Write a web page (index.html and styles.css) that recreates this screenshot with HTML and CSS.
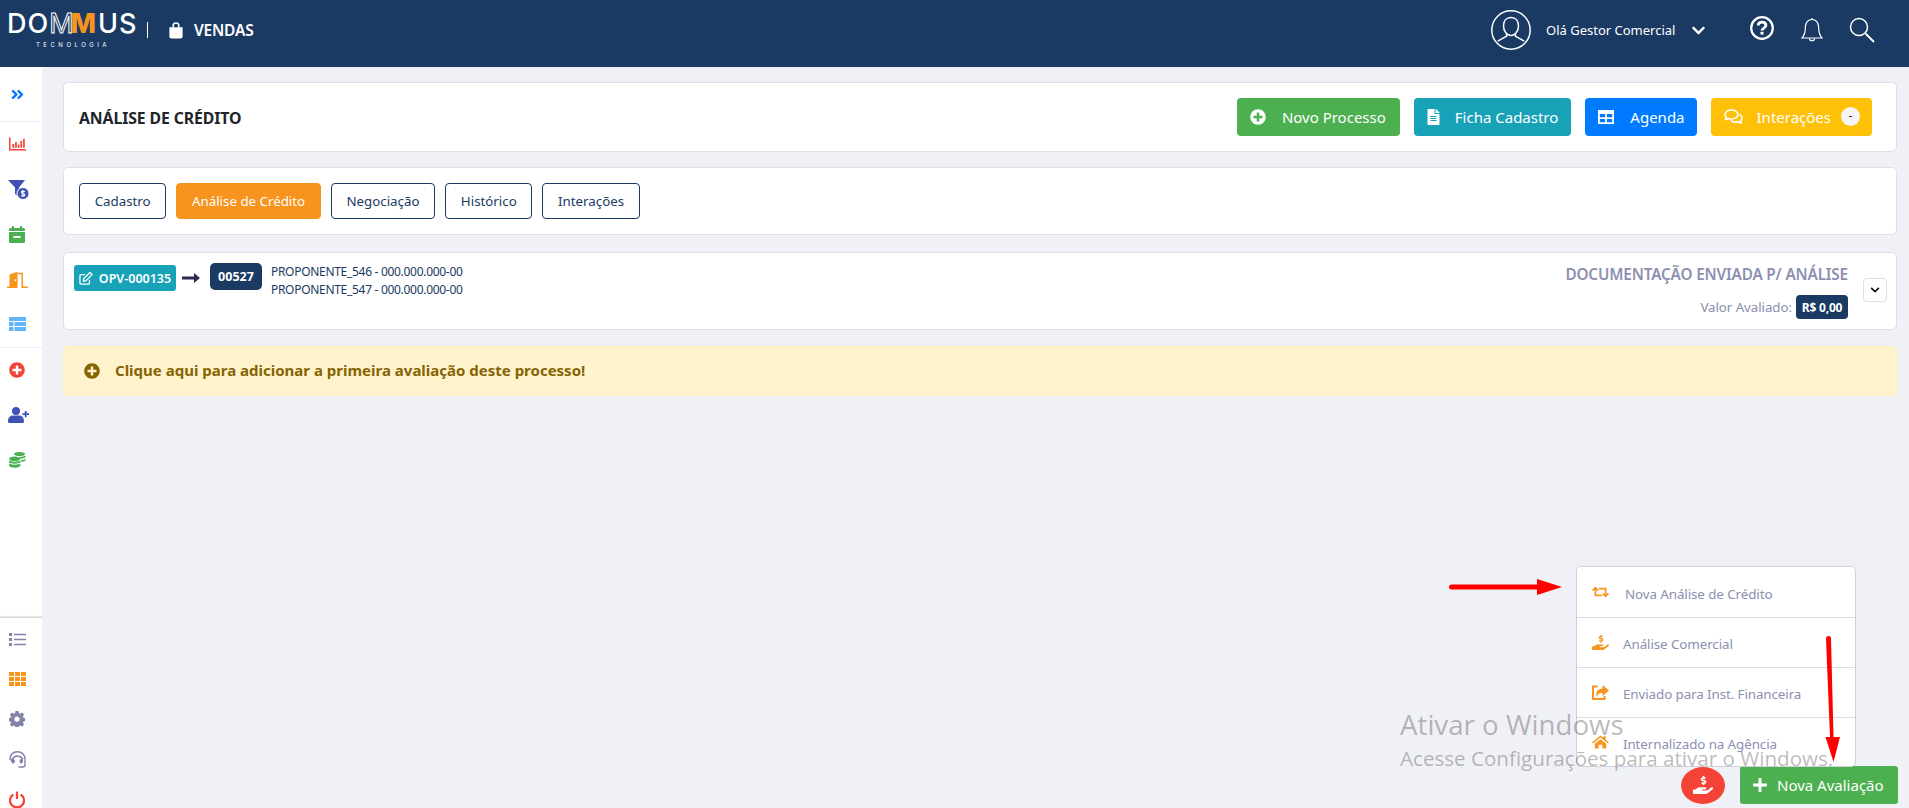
FILE: index.html
```html
<!DOCTYPE html>
<html lang="pt-BR">
<head>
<meta charset="utf-8">
<title>Dommus Vendas</title>
<link rel="stylesheet" href="styles.css">
</head>
<body>
<svg class="defs" aria-hidden="true">
  <symbol id="plus-circle" viewBox="0 0 512 512"><path fill="currentColor" d="M256 8C119 8 8 119 8 256s111 248 248 248 248-111 248-248S393 8 256 8zm144 276c0 6.6-5.4 12-12 12h-92v92c0 6.6-5.4 12-12 12h-56c-6.6 0-12-5.4-12-12v-92h-92c-6.6 0-12-5.4-12-12v-56c0-6.6 5.4-12 12-12h92v-92c0-6.6 5.4-12 12-12h56c6.6 0 12 5.4 12 12v92h92c6.6 0 12 5.4 12 12v56z"/></symbol>
  <symbol id="chevron" viewBox="0 0 448 512"><path fill="currentColor" d="M207.029 381.476L12.686 187.132c-9.373-9.373-9.373-24.569 0-33.941l22.667-22.667c9.357-9.357 24.522-9.375 33.901-.04L224 284.505l154.745-154.021c9.379-9.335 24.544-9.317 33.901.04l22.667 22.667c9.373 9.373 9.373 24.569 0 33.941L240.971 381.476c-9.373 9.372-24.569 9.372-33.942 0z"/></symbol>
  <symbol id="plus" viewBox="0 0 448 512"><path fill="currentColor" d="M416 208H272V64c0-17.67-14.33-32-32-32h-32c-17.67 0-32 14.33-32 32v144H32c-17.67 0-32 14.33-32 32v32c0 17.67 14.33 32 32 32h144v144c0 17.67 14.33 32 32 32h32c17.67 0 32-14.33 32-32V304h144c17.67 0 32-14.33 32-32v-32c0-17.67-14.33-32-32-32z"/></symbol>
  <symbol id="hand" viewBox="0 0 576 512"><path fill="currentColor" d="M271.06,144.3l54.27,14.3a8.59,8.59,0,0,1,6.63,8.1c0,4.6-4.09,8.4-9.12,8.4h-35.6a30,30,0,0,1-11.19-2.2c-5.24-2.2-11.28-1.7-15.3,2l-19,17.5a11.68,11.68,0,0,0-2.25,2.66,11.42,11.42,0,0,0,3.88,15.74,83.77,83.77,0,0,0,34.51,11.5V240c0,8.8,7.83,16,17.37,16h17.37c9.55,0,17.38-7.2,17.38-16V222.4c32.93-3.6,57.84-31,53.5-63-3.15-23-22.46-41.3-46.56-47.7L282.68,97.4a8.59,8.59,0,0,1-6.63-8.1c0-4.6,4.09-8.4,9.12-8.4h35.6A30,30,0,0,1,332,83.1c5.23,2.2,11.28,1.7,15.3-2l19-17.5A11.31,11.31,0,0,0,368.47,61a11.43,11.43,0,0,0-3.84-15.78,83.82,83.82,0,0,0-34.52-11.5V16c0-8.8-7.82-16-17.37-16H295.37C285.82,0,278,7.2,278,16V33.6c-32.89,3.6-57.85,31-53.51,63C227.63,119.6,247,137.9,271.06,144.3ZM565.27,328.1c-11.8-10.7-30.2-10-42.6,0L430.27,402a63.64,63.64,0,0,1-40,14H272a16,16,0,0,1,0-32h78.29c15.9,0,30.71-10.9,33.25-26.6a31.2,31.2,0,0,0,.46-5.46A32,32,0,0,0,352,320H192a117.66,117.66,0,0,0-74.1,26.29L71.4,384H16A16,16,0,0,0,0,400v96a16,16,0,0,0,16,16H372.77a64,64,0,0,0,40-14L564,377a32,32,0,0,0,1.28-48.9Z"/></symbol>
</svg>

<header class="topbar">
  <div class="brand">
    <div class="logo">
      <div class="logo-word">DO<span class="m-outline">M</span><span class="m-fill">M</span>US</div>
      <div class="logo-sub">TECNOLOGIA</div>
    </div>
    <span class="bar-sep"></span>
    <svg class="bag" viewBox="0 0 16 18"><path fill="none" stroke="#fff" stroke-width="1.600" d="M5 6V4a3 3 0 0 1 6 0v2"/><path fill="#fff" d="M1 5.500h14v9.800a2.200 2.200 0 0 1-2.200 2.200H3.200A2.200 2.200 0 0 1 1 15.300z"/></svg>
    <span class="module">VENDAS</span>
  </div>
  <div class="top-right">
    <svg class="avatar" viewBox="0 0 40 40" fill="none" stroke="#fff" stroke-width="1.500"><circle cx="20" cy="20" r="19.200"/><path d="M20 7.500c-4.600 0-7.500 3.400-7.500 8.200 0 4.800 3 9.800 7.500 9.800s7.500-5 7.500-9.800c0-4.800-2.900-8.200-7.500-8.200z"/><path d="M15.500 24l.2 2.200-9 4.900M24.500 24l-.2 2.200 9 4.900"/></svg>
    <span class="user">Olá Gestor Comercial</span>
    <svg class="user-chev"><use href="#chevron"/></svg>
    <svg class="help" viewBox="0 0 24 24" fill="none" stroke="#fff"><circle cx="12" cy="12" r="10.800" stroke-width="2.200"/><path stroke-width="2.800" d="M8.200 9.600c0-2.200 1.700-3.500 3.900-3.500s3.800 1.300 3.800 3.200c0 2.800-3.900 2.700-3.900 5.300"/><path stroke-width="3" d="M12 15.800v2.800"/></svg>
    <svg class="bell" viewBox="0 0 22 26" fill="none" stroke="#fff" stroke-width="1.200"><path d="M11 2.500c-4 0-6.600 3.300-6.600 7.500 0 6.500-1.200 8.500-3.400 11h20c-2.200-2.500-3.400-4.500-3.400-11 0-4.200-2.600-7.500-6.600-7.500z"/><path d="M11 1v1.500M8.500 21.500c0 3 5 3 5 0"/></svg>
    <svg class="search" viewBox="0 0 26 26" fill="none" stroke="#fff" stroke-width="1.500"><circle cx="10" cy="10" r="8.500"/><path d="M16.500 16.500L25 25" stroke-width="1.800"/></svg>
  </div>
</header>

<div class="shell">
  <aside class="side">
    <div class="side-top">
      <div class="side-head">
        <svg class="ic ic-expand" viewBox="0 0 448 512"><path fill="currentColor" d="M224.3 273l-136 136c-9.400 9.400-24.600 9.400-33.900 0l-22.600-22.600c-9.400-9.400-9.400-24.600 0-33.900l96.400-96.400-96.400-96.400c-9.400-9.400-9.400-24.600 0-33.900L54.300 103c9.400-9.400 24.600-9.400 33.900 0l136 136c9.500 9.400 9.500 24.600.1 34zm192-34l-136-136c-9.400-9.400-24.600-9.400-33.900 0l-22.600 22.600c-9.400 9.400-9.400 24.600 0 33.900l96.400 96.400-96.400 96.400c-9.400 9.400-9.400 24.600 0 33.900l22.600 22.600c9.400 9.400 24.600 9.400 33.900 0l136-136c9.400-9.200 9.400-24.400 0-33.800z"/></svg>
      </div>
      <div class="side-group">
        <div class="slot slot-chart"><svg class="ic red" viewBox="0 0 18 14"><path fill="currentColor" d="M0 0h1.600v12.200H18V14H0z"/><path fill="currentColor" d="M3.500 7h2v4h-2zM6.500 5h1.800v6H6.500zM9.300 7.500h1.800V11H9.300zM12.100 3.500h1.800V11h-1.800zM14.900 1.500h1.800V11h-1.800z"/></svg></div>
        <div class="slot"><svg class="ic ic-funnel" viewBox="0 0 21 20"><path fill="#3f51b5" d="M0 0h17l-6 7.500V17l-4-3V7.500z"/><circle cx="15" cy="13.500" r="6" fill="#3f51b5" stroke="#fff" stroke-width="1"/><path fill="none" stroke="#fff" stroke-width="1.100" d="M16.800 11.800c-.8-1-3.400-1-3.500.5 0 1.700 3.600.9 3.500 2.600-.1 1.500-2.800 1.400-3.600.4M15 10v7"/></svg></div>
        <div class="slot"><svg class="ic green" viewBox="0 0 16 17"><path fill="currentColor" d="M3 0h2v2h6V0h2v2h1.500A1.500 1.500 0 0 1 16 3.500v12a1.500 1.500 0 0 1-1.500 1.500h-13A1.500 1.500 0 0 1 0 15.500v-12A1.500 1.500 0 0 1 1.500 2H3z"/><path fill="#fff" d="M0 5h16v1H0zM4.500 10h7v2h-7z"/></svg></div>
        <div class="slot"><svg class="ic ic-door orange" viewBox="0 0 21 16"><path fill="currentColor" d="M0 14.500h2.500V2.500L9.500 0h1v16H0z"/><path fill="#fff" d="M7.500 7.500h1.500v1.500H7.500z"/><path fill="none" stroke="currentColor" stroke-width="1.500" d="M11 1.500h4.200v13.700H21"/></svg></div>
        <div class="slot slot-up"><svg class="ic ic-table lblue" viewBox="0 0 17 14"><path fill="currentColor" d="M0 0h17v4H0zM0 5h4.500v4H0zM5.500 5H17v4H5.500zM0 10h4.500v4H0zM5.500 10H17v4H5.500z"/></svg></div>
      </div>
      <div class="side-group side-group-b">
        <div class="slot"><svg class="ic ic-addc red"><use href="#plus-circle"/></svg></div>
        <div class="slot"><svg class="ic ic-user indigo" viewBox="0 0 21 16"><circle cx="8" cy="4" r="4" fill="currentColor"/><path fill="currentColor" d="M0 14c0-3.500 2.500-5.500 5-5.500h6c2.500 0 5 2 5 5.500v.5a1.500 1.500 0 0 1-1.500 1.500h-13A1.500 1.500 0 0 1 0 14.500zM16.800 4h1.800v2.200h2.400V8h-2.400v2.200h-1.800V8h-2.400V6.200h2.400z"/></svg></div>
        <div class="slot"><svg class="ic ic-coins" viewBox="0 0 17 16"><g fill="#4caf50"><ellipse cx="10.500" cy="2" rx="5.500" ry="2"/><path d="M11 4.800c2.200 0 4.300-.4 5.500-1.300v1.700c-.8.900-3 1.300-5 1.300l-1.500-.1zM12 8c1.900-.1 3.700-.5 4.500-1.300v1.700c-.6.700-2.400 1.200-4.200 1.300z"/><ellipse cx="5.700" cy="6.800" rx="5.700" ry="2.300"/><path d="M0 8.500c1.300 1.500 10.200 1.500 11.400 0v2c-1.200 1.500-10.200 1.500-11.400 0zM0 11.600c1.300 1.500 10.200 1.500 11.400 0v2c-1.200 2.900-10.200 2.900-11.400 0z"/></g></svg></div>
      </div>
    </div>
    <div class="side-bottom">
      <div class="slot-b"><svg class="ic ic-list slate" viewBox="0 0 17 13"><path fill="currentColor" d="M0 0h3v3H0zM5 .7h12v1.600H5zM0 5h3v3H0zM5 5.700h12v1.600H5zM0 10h3v3H0zM5 10.700h12v1.600H5z"/></svg></div>
      <div class="slot-b"><svg class="ic ic-grid orange" viewBox="0 0 17 14"><path fill="currentColor" d="M0 0h5v4H0zM6 0h5v4H6zM12 0h5v4h-5zM0 5h5v4H0zM6 5h5v4H6zM12 5h5v4h-5zM0 10h5v4H0zM6 10h5v4H6zM12 10h5v4h-5z"/></svg></div>
      <div class="slot-b"><svg class="ic ic-gear slate" viewBox="0 0 16 16"><path fill="currentColor" fill-rule="evenodd" d="M6.500 0h3l.4 2.100 1.300.6 1.800-1.200 2.100 2.100-1.200 1.800.6 1.300 2 .4v3l-2 .4-.6 1.300 1.200 1.800-2.100 2.100-1.800-1.200-1.300.6-.4 2.100h-3l-.4-2.100-1.300-.6-1.800 1.200L.9 13.600l1.200-1.800-.6-1.300-2-.4v-3l2-.4.6-1.300L.9 3.600 3 1.500l1.800 1.200 1.300-.6zM8 5.500a2.600 2.600 0 1 0 0 5.200 2.600 2.600 0 0 0 0-5.200z"/></svg></div>
      <div class="slot-b"><svg class="ic ic-head slate" viewBox="0 0 17 17" fill="none" stroke="currentColor" stroke-width="1.400"><path d="M1 9C.8 3.500 4.200.8 8.500.8s7.500 2.700 7.500 7V14c0 1.300-1 2-2.500 2H9.500"/><path d="M3 8c2-2.500 4.500-3 5.500-3s3.500.5 5.500 3"/><path fill="currentColor" stroke="none" d="M3.500 7.700c1.400 0 2.500 1 2.500 2.300s-.7 2.500-1.800 2.500C2.800 12.500 1.500 10 1.500 8.500zM13 7.700c-1.400 0-2.500 1-2.500 2.300s.7 2.500 1.800 2.500c1 0 1.700-1.200 1.700-2.500V8.500z"/></svg></div>
      <div class="slot-b"><svg class="ic ic-power red" viewBox="0 0 16 17" fill="none" stroke="currentColor" stroke-width="2.200"><path d="M4.300 3.500a7 7 0 1 0 7.400 0"/><path d="M8 .5v7.500"/></svg></div>
    </div>
  </aside>

  <main class="content">
    <section class="card title-card">
      <h1 class="page-title">ANÁLISE DE CRÉDITO</h1>
      <div class="actions">
        <a class="btn btn-green"><svg class="btn-ic"><use href="#plus-circle"/></svg>Novo Processo</a>
        <a class="btn btn-teal"><svg class="btn-ic btn-ic-doc" viewBox="0 0 384 512"><path fill="currentColor" d="M224 136V0H24C10.700 0 0 10.700 0 24v464c0 13.300 10.700 24 24 24h336c13.300 0 24-10.700 24-24V160H248c-13.200 0-24-10.800-24-24zm64 236c0 6.600-5.400 12-12 12H108c-6.600 0-12-5.400-12-12v-8c0-6.600 5.400-12 12-12h168c6.600 0 12 5.400 12 12v8zm0-64c0 6.600-5.400 12-12 12H108c-6.600 0-12-5.400-12-12v-8c0-6.600 5.400-12 12-12h168c6.600 0 12 5.400 12 12v8zm0-72v8c0 6.600-5.400 12-12 12H108c-6.600 0-12-5.400-12-12v-8c0-6.600 5.400-12 12-12h168c6.600 0 12 5.400 12 12zm96-114.100v6.100H256V0h6.100c6.400 0 12.500 2.500 17 7l97.900 98c4.500 4.500 7 10.600 7 16.900z"/></svg>Ficha Cadastro</a>
        <a class="btn btn-blue"><svg class="btn-ic" viewBox="0 0 16 14"><path fill="currentColor" fill-rule="evenodd" d="M0 0h16v14H0zM1.800 4v3.200h5.300V4zm7.100 0v3.200h5.300V4zM1.800 9v3.200h5.300V9zm7.100 0v3.200h5.300V9z"/></svg>Agenda</a>
        <a class="btn btn-yellow"><svg class="btn-ic btn-ic-chat" viewBox="0 0 19 15" fill="none" stroke="currentColor" stroke-width="1.600"><path d="M7.500 1C3.900 1 1 3 1 5.500c0 1.100.6 2.200 1.500 3L1.500 10.500c1.200 0 2.500-.5 3-1 1 .4 2 .5 3 .5C11.100 10 14 8 14 5.500S11.100 1 7.500 1z"/><path d="M15.500 5.500c1.600.8 2.500 2 2.500 3.500 0 1-.5 2-1.400 2.800l.9 2c-1.200 0-2.300-.4-3-1-1 .4-2 .5-3 .5-2 0-3.700-.7-4.800-2"/></svg>Interações<span class="count">-</span></a>
      </div>
    </section>

    <section class="card tabs-card">
      <a class="tab">Cadastro</a>
      <a class="tab tab-on">Análise de Crédito</a>
      <a class="tab">Negociação</a>
      <a class="tab">Histórico</a>
      <a class="tab">Interações</a>
    </section>

    <section class="card proc-card">
      <div class="proc-left">
        <span class="opv"><svg class="opv-ic" viewBox="0 0 16 15" fill="none" stroke="currentColor" stroke-width="1.500"><path d="M12 9v3.500A1.500 1.500 0 0 1 10.500 14h-8A1.500 1.500 0 0 1 1 12.500v-8A1.500 1.500 0 0 1 2.500 3H7"/><path d="M5.500 7.500l-.5 3 3-.5 7-7-2.500-2.500z"/></svg>OPV-000135</span>
        <svg class="arrow-dark" viewBox="0 0 18 10"><path fill="#2d2a55" d="M0 3.500h12V0l6 5-6 5V6.500H0z"/></svg>
        <span class="code">00527</span>
        <div class="people">
          <div>PROPONENTE_546 - 000.000.000-00</div>
          <div>PROPONENTE_547 - 000.000.000-00</div>
        </div>
      </div>
      <div class="proc-right">
        <div class="status-col">
          <div class="status">DOCUMENTAÇÃO ENVIADA P/ ANÁLISE</div>
          <div class="value-row">Valor Avaliado:<span class="value">R$ 0,00</span></div>
        </div>
        <button class="toggle" type="button"><svg><use href="#chevron"/></svg></button>
      </div>
    </section>

    <section class="notice"><svg class="notice-ic"><use href="#plus-circle"/></svg>Clique aqui para adicionar a primeira avaliação deste processo!</section>
  </main>
</div>

<div class="fab-zone">
  <ul class="fab-menu">
    <li class="first"><svg class="mi" viewBox="0 0 640 512"><path fill="currentColor" d="M629.657 343.598L528.971 444.284c-9.373 9.373-24.569 9.373-33.941 0L394.343 343.598c-9.373-9.373-9.373-24.569 0-33.941l10.823-10.823c9.562-9.562 25.133-9.34 34.419.492L480 342.118V160H292.451a24.005 24.005 0 0 1-16.971-7.029l-16-16C244.361 121.851 255.069 96 276.451 96H520c13.255 0 24 10.745 24 24v222.118l40.416-43.792c9.285-9.831 24.856-10.054 34.419-.492l10.823 10.823c9.372 9.372 9.372 24.569-.001 33.941zm-265.138 15.431A23.999 23.999 0 0 0 347.548 352H160V169.881l40.416 43.792c9.286 9.831 24.856 10.054 34.419.491l10.822-10.822c9.373-9.373 9.373-24.569 0-33.941L144.971 67.716c-9.373-9.373-24.569-9.373-33.941 0L10.343 168.402c-9.373 9.373-9.373 24.569 0 33.941l10.822 10.822c9.562 9.562 25.133 9.34 34.419-.491L96 169.881V392c0 13.255 10.745 24 24 24h243.549c21.382 0 32.09-25.851 16.971-40.971l-16.001-16z"/></svg>Nova Análise de Crédito</li>
    <li><svg class="mi mi-hand"><use href="#hand"/></svg>Análise Comercial</li>
    <li><svg class="mi mi-share" viewBox="0 0 17 15"><path fill="currentColor" d="M10.500 0L17 5.500 10.500 11V8C7 8 5.300 8.700 5.500 12 3.500 10.500 3.300 4 10.500 3.500z"/><path fill="none" stroke="currentColor" stroke-width="2" d="M5.500 1.500H1v12.500h11.500V11"/></svg>Enviado para Inst. Financeira</li>
    <li><svg class="mi mi-home" viewBox="0 0 18 14"><path fill="currentColor" d="M9 0l3 2.500V1h2.500v3.700L18 7.500l-1 1.200-8-6.500-8 6.500-1-1.200zM3 8.800L9 4l6 4.800V14h-4V10H7v4H3z"/></svg>Internalizado na Agência</li>
  </ul>
  <a class="fab-round"><svg><use href="#hand"/></svg></a>
  <a class="fab-add"><svg class="fab-plus"><use href="#plus"/></svg>Nova Avaliação</a>
</div>

<div class="watermark">
  <div class="wm-1">Ativar o Windows</div>
  <div class="wm-2">Acesse Configurações para ativar o Windows.</div>
</div>

<svg class="anno anno-h" viewBox="0 0 113 16"><path fill="#f00" d="M2.500 5.500h85.500V0l25 8-25 8v-5.500H2.500a2.500 2.500 0 0 1 0-5z"/></svg>
<svg class="anno anno-v" viewBox="0 0 16 128"><path fill="#f00" d="M0 2.500a2.500 2.500 0 0 1 5 0l2.500 98.500h6.500l-6.500 25-8-25h4.500z" transform="translate(1 0)"/></svg>
</body>
</html>
```

FILE: styles.css
```css
* { box-sizing: border-box; }
html, body { margin: 0; height: 100%; }
body {
  width: 1909px;
  height: 808px;
  overflow: hidden;
  position: relative;
  background: #f0f1f7;
  font-family: "Noto Sans", "Open Sans", sans-serif;
  color: #212529;
  display: flex;
  flex-direction: column;
}
.defs { width: 0; height: 0; position: absolute; }

.topbar {
  height: 67px;
  flex: none;
  background: #1a3a63;
  display: flex;
  justify-content: space-between;
  align-items: center;
  color: #fff;
  padding: 0 34px 7px 7px;
}
.brand { display: flex; align-items: center; }
.logo { width: 131px; padding-top: 5px; }
.logo-word {
  font-family: "Inter", sans-serif;
  font-size: 27px;
  line-height: 24px;
  font-weight: 500;
  letter-spacing: 1px;
  white-space: nowrap;
  margin-top: -4px;
}
.m-outline { color: #1a3a63; -webkit-text-stroke: 1px #fff; margin-right: -4px; font-weight: 400; }
.m-fill { color: #f7941d; font-weight: 800; margin-right: 1px; }
.logo-sub {
  font-family: "Inter", sans-serif;
  font-size: 6px;
  line-height: 8px;
  letter-spacing: 3.500px;
  margin: 5px 0 0 29px;
  white-space: nowrap;
}
.bar-sep { width: 1px; height: 16px; background: #fff; margin: 0 0 0 9px; }
.bag { width: 16px; height: 17px; margin-left: 20px; }
.module { font-size: 15.500px; font-weight: 600; margin-left: 10px; letter-spacing: -0.200px; }
.top-right { display: flex; align-items: center; }
.avatar { width: 40px; height: 40px; }
.user { font-size: 13px; margin-left: 15px; width: 130px; white-space: nowrap; }
.user-chev { width: 13px; height: 15px; margin-left: 16px; }
.help { width: 24px; height: 24px; margin: -4px 0 0 45px; }
.bell { width: 22px; height: 26px; margin-left: 27px; }
.search { width: 26px; height: 26px; margin-left: 26px; }

.shell { flex: 1; display: flex; min-height: 0; }
.side {
  width: 42px;
  flex: none;
  background: #fff;
  display: flex;
  flex-direction: column;
  justify-content: space-between;
}
.side-head { height: 55px; display: flex; align-items: center; justify-content: center; padding-right: 8px; border-bottom: 1px solid #eceef3; }
.side-group { border-bottom: 1px solid #eceef3; }
.side-group-b { border-bottom: 0; margin-top: -1px; }
.slot { height: 45px; display: flex; align-items: center; justify-content: center; padding-right: 8px; }
.slot-chart { padding-bottom: 2px; }
.slot-up { padding-bottom: 2px; }
.slot-b { height: 38px; display: flex; align-items: center; justify-content: center; padding-right: 8px; margin-top: 2px; }
.side-bottom { height: 191px; border-top: 1px solid #d6d6d6; box-shadow: 0 -1px 1px #e7e7e7; }
.ic { width: 17px; height: 14px; display: block; }
.ic-expand { width: 13px; height: 15px; color: #007bff; }
.ic-funnel { width: 21px; height: 20px; margin-left: 3px; }
.ic-door { width: 21px; height: 16px; }
.ic-table { width: 17px; height: 14px; }
.ic-addc { width: 16px; height: 16px; }
.ic-user { width: 21px; height: 16px; margin-left: 3px; }
.ic-coins { width: 17px; height: 16px; }
.ic-list { width: 17px; height: 13px; }
.ic-gear, .ic-head { width: 16px; height: 16px; }
.ic-head { width: 17px; height: 17px; }
.ic-power { width: 16px; height: 17px; }
.green { width: 16px; height: 17px; color: #4caf50; }
.red { color: #f44336; }
.orange { color: #f7941d; }
.lblue { color: #64b5f6; }
.indigo { color: #3f51b5; }
.slate { color: #8183a8; }

.content { flex: 1; min-width: 0; padding: 15px 12px 0 21px; }
.card {
  background: #fff;
  border: 1px solid #dfe0e6;
  border-radius: 5px;
}
.title-card {
  height: 70px;
  display: flex;
  align-items: center;
  justify-content: space-between;
  padding: 0 24px 0 15px;
}
.page-title { margin: 1px 0 0; font-size: 15.800px; font-weight: 700; color: #212529; letter-spacing: -0.100px; }
.actions { display: flex; gap: 14px; margin-top: -1px; }
.btn {
  height: 38px;
  display: flex;
  align-items: center;
  border-radius: 4px;
  color: #fff;
  font-size: 15px;
  padding: 0 13px;
  white-space: nowrap;
}
.btn-ic { width: 16px; height: 16px; margin-right: 16px; flex: none; }
.btn-ic-doc { width: 13px; margin-right: 15px; }
.btn-ic-chat { width: 19px; height: 15px; margin-right: 14px; }
.btn-green { background: #4caf50; padding-right: 14px; }
.btn-teal { background: #17a2b8; }
.btn-blue { background: #007bff; padding-right: 12px; }
.btn-yellow { background: #ffc107; padding-right: 12px; }
.count {
  width: 19px; height: 19px;
  border-radius: 50%;
  background: #f5f5f8;
  color: #212529;
  font-size: 12px;
  line-height: 18px;
  text-align: center;
  margin: 0 0 0 10px;
}

.tabs-card {
  height: 68px;
  margin-top: 15px;
  display: flex;
  align-items: center;
  gap: 10px;
  padding: 0 15px;
}
.tab {
  height: 36px;
  display: flex;
  align-items: center;
  padding: 0 14.700px;
  border: 1px solid #1a3a63;
  border-radius: 4px;
  font-size: 13.300px;
  color: #1a3a63;
  white-space: nowrap;
}
.tab-on { background: #f7941d; border-color: #f7941d; color: #fff; }

.proc-card {
  height: 78px;
  margin-top: 17px;
  display: flex;
  justify-content: space-between;
  padding: 0 9px 0 10px;
}
.proc-left { display: flex; align-items: flex-start; }
.opv {
  width: 102px; height: 26px;
  margin-top: 12px;
  display: flex;
  align-items: center;
  justify-content: center;
  background: #17a2b8;
  border-radius: 3px;
  color: #fff;
  font-size: 12.500px;
  font-weight: 600;
  white-space: nowrap;
}
.opv-ic { width: 14px; height: 13px; margin-right: 6px; }
.arrow-dark { width: 18px; height: 10px; margin: 20px 10px 0 6px; }
.code {
  width: 52px; height: 27px;
  margin-top: 10px;
  background: #1a3a63;
  border-radius: 5px;
  color: #fff;
  font-size: 12.500px;
  font-weight: 700;
  display: flex; align-items: center; justify-content: center;
}
.people { margin: 10px 0 0 9px; font-size: 12px; line-height: 18px; color: #1a3a63; letter-spacing: -0.300px; }
.proc-right { display: flex; align-items: flex-start; }
.status-col { display: flex; flex-direction: column; align-items: flex-end; margin: 11px 15px 0 0; }
.status { font-size: 15.300px; line-height: 20px; font-weight: 600; color: #8c8fb0; white-space: nowrap; letter-spacing: -0.150px; }
.value-row { display: flex; align-items: center; margin-top: 11px; font-size: 13.400px; color: #8c8fb0; letter-spacing: -0.100px; }
.value {
  width: 52px; height: 24px;
  margin-left: 4px;
  background: #1a3a63;
  border-radius: 4px;
  color: #fff;
  font-size: 12px;
  font-weight: 700;
  display: flex; align-items: center; justify-content: center;
  white-space: nowrap;
  letter-spacing: -0.200px;
}
.toggle {
  width: 24px; height: 24px;
  padding: 0;
  background: #fff;
  border: 1px solid #dfe0e6;
  border-radius: 4px;
  display: flex; align-items: center; justify-content: center;
  color: #111;
  margin-top: 25px;
}
.toggle svg { width: 10px; height: 10px; }

.notice {
  height: 50px;
  margin-top: 16px;
  background: #fff3cd;
  border: 1px solid #ffeeba;
  border-radius: 4px;
  display: flex;
  align-items: center;
  padding: 0 0 2px 20px;
  color: #856404;
  font-size: 15px;
  font-weight: 700;
}
.notice-ic { width: 16px; height: 16px; margin: 2px 15px 0 0; }

.fab-zone {
  position: absolute;
  right: 11px;
  bottom: 4px;
  display: flex;
  align-items: center;
  gap: 15px;
}
.fab-menu {
  position: absolute;
  right: 42px;
  bottom: 37px;
  width: 280px;
  height: 201px;
  margin: 0;
  padding: 0;
  list-style: none;
  background: #fff;
  border: 1px solid #cfd0da;
  border-radius: 5px;
  color: #8c8fb0;
  font-size: 13.400px;
}
.fab-menu li {
  height: 50px;
  display: flex;
  align-items: center;
  padding: 2px 0 0 15px;
  border-top: 1px solid #dcdde3;
  letter-spacing: -0.100px;
  white-space: nowrap;
}
.fab-menu li.first { border-top: 0; height: 50px; padding-top: 3px; }
.mi { width: 17px; height: 14px; margin: -3px 14px 0 0; color: #f7941d; flex: none; }
.first .mi { margin: -3px 16px 0 0; height: 14px; }
.mi-hand { height: 15px; }
.mi-share { height: 15px; }
.fab-round {
  width: 44px; height: 37px;
  border-radius: 50%;
  background: #f44336;
  color: #fff;
  display: flex; align-items: center; justify-content: center;
}
.fab-round svg { width: 20px; height: 18px; }
.fab-add {
  width: 158px; height: 38px;
  background: #4caf50;
  border-radius: 3px;
  color: #fff;
  font-size: 15px;
  display: flex; align-items: center;
  padding-left: 13px;
  white-space: nowrap;
}
.fab-plus { width: 14px; height: 16px; margin-right: 10px; }

.watermark {
  position: absolute;
  left: 1400px;
  top: 706px;
  color: rgba(60, 60, 60, 0.36);
  pointer-events: none;
  white-space: nowrap;
  font-family: "Open Sans", "Noto Sans", sans-serif;
}
.wm-1 { font-size: 27.700px; line-height: 36px; }
.wm-2 { font-size: 20.600px; line-height: 28px; margin-top: 2px; }

.anno { position: absolute; pointer-events: none; }
.anno-h { left: 1449px; top: 579px; width: 113px; height: 16px; }
.anno-v { left: 1825px; top: 636px; width: 16px; height: 128px; }
```
